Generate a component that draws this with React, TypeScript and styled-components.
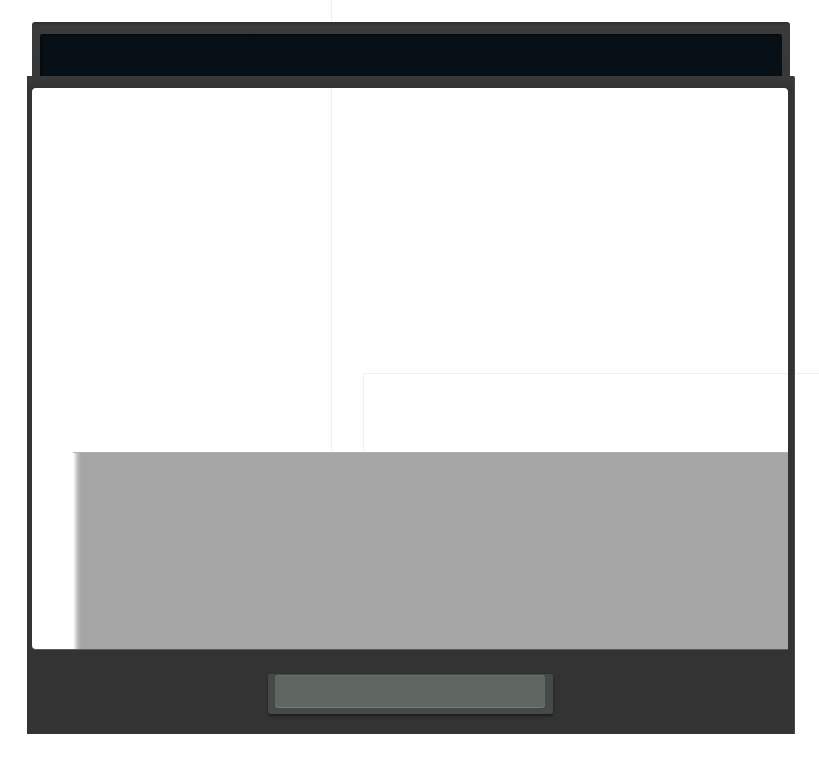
import React from "react";
import styled, { createGlobalStyle } from "styled-components";

const GlobalStyle = createGlobalStyle`
  html, body {
    margin: 0;
    padding: 0;
    background: #ffffff;
    font-family: "Liberation Sans", Arial, sans-serif;
  }
`;

const Page = styled.div`
  position: relative;
  width: 819px;
  height: 761px;
  overflow: hidden;
  background: #ffffff;
`;

// faint guide lines; the frame covers them, the white panel repeats them
const GuideLine = styled.div<{ $x: number; $y: number; $w: number; $h: number }>`
  position: absolute;
  left: ${(p) => p.$x}px;
  top: ${(p) => p.$y}px;
  width: ${(p) => p.$w}px;
  height: ${(p) => p.$h}px;
  background: #f0f0f0;
  z-index: 0;
`;

const Device = styled.div`
  position: relative;
  z-index: 1;
  display: flex;
  flex-direction: column;
  width: 768px;
  padding: 22px 0 0 27px;
`;

const TopBar = styled.div`
  margin: 0 5px;
  height: 54px;
  box-sizing: border-box;
  padding: 12px 8px 0;
  background: linear-gradient(#2e2e2e 0, #3a3a3a 4px, #383838 100%);
  border-radius: 3px 3px 0 0;
`;

const Screen = styled.div`
  height: 42px;
  background: #061016;
  border-radius: 3px 3px 0 0;
  box-shadow: inset 1px 1px 2px rgba(0, 0, 0, 0.5);
`;

const Body = styled.div`
  display: flex;
  flex-direction: column;
  background: #333333;
  border-right: 1px solid #4a4a4a;
  border-radius: 0 2px 0 0;
`;

const PanelWrap = styled.div`
  padding: 12px 6px 0 5px;
  background: linear-gradient(#3a3a3a, #333333 12px);
`;

const Panel = styled.div`
  position: relative;
  display: flex;
  flex-direction: column;
  height: 561px;
  border-radius: 4px 4px 0 4px;
  overflow: hidden;
  background: #ffffff;
  box-shadow: 0 1px 0 #5a5a5a;
`;

const Blank = styled.div`
  flex: 0 0 364px;
`;

const Shade = styled.div`
  position: relative;
  z-index: 1;
  flex: 1;
  margin-left: 41px;
  background: linear-gradient(to right, #ffffff 0, #e6e6e6 2px, #c4c4c4 4px, #aaaaaa 7px, #a5a5a5 9px);
  border-top: 1px solid #b0b0b0;
`;

const Footer = styled.div`
  height: 85px;
  display: flex;
  justify-content: center;
  align-items: flex-start;
  padding-top: 25px;
  box-sizing: border-box;
`;

const Button = styled.button`
  display: flex;
  width: 285px;
  height: 40px;
  padding: 1px 8px 6px 7px;
  box-sizing: border-box;
  border: none;
  border-radius: 2px;
  background: #454a46;
  box-shadow: 0 2px 3px rgba(0, 0, 0, 0.45);
  cursor: pointer;
`;

const ButtonFace = styled.span`
  flex: 1;
  border-radius: 4px;
  background: #5f6661;
  box-shadow: inset 0 1px 0 #6a716c, inset 0 -1px 0 #757b77;
`;

export default function App() {
  return (
    <>
      <GlobalStyle />
      <Page>
        <GuideLine $x={331} $y={0} $w={1} $h={452} />
        <GuideLine $x={363} $y={373} $w={456} $h={1} />
        <Device>
          <TopBar>
            <Screen />
          </TopBar>
          <Body>
            <PanelWrap>
              <Panel>
                <GuideLine $x={299} $y={0} $w={1} $h={364} />
                <GuideLine $x={331} $y={285} $w={430} $h={1} />
                <GuideLine $x={331} $y={285} $w={1} $h={80} />
                <Blank />
                <Shade />
              </Panel>
            </PanelWrap>
            <Footer>
              <Button type="button">
                <ButtonFace />
              </Button>
            </Footer>
          </Body>
        </Device>
      </Page>
    </>
  );
}
